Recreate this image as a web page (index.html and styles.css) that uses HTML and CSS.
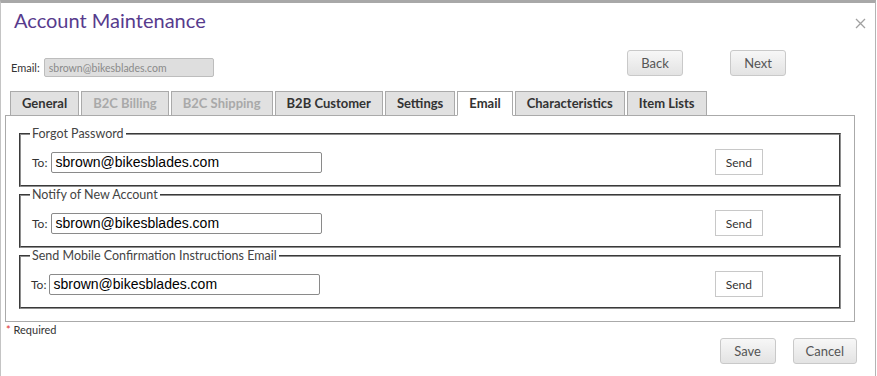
FILE: index.html
```html
<!DOCTYPE html>
<html lang="en">
<head>
  <meta charset="UTF-8" />
  <title>Account Maintenance</title>
  <link rel="stylesheet" href="styles.css">
</head>
<body>
  <div class="dialog">
    <div class="dialog-header">
      <h1 class="dialog-title">Account Maintenance</h1>
      <button type="button" class="close-btn" aria-label="Close">
        <svg width="11" height="11" viewBox="0 0 11 11"><path d="M1 1 L10 10 M10 1 L1 10" stroke="#a0a0a0" stroke-width="1.3" fill="none"/></svg>
      </button>
    </div>

    <div class="top-row">
      <div class="account-email">
        <label for="accountEmail">Email:</label>
        <input type="text" id="accountEmail" value="sbrown@bikesblades.com" disabled />
      </div>
      <div class="nav-buttons">
        <button type="button" class="btn">Back</button>
        <button type="button" class="btn">Next</button>
      </div>
    </div>

    <ul class="tabs">
      <li class="tab">General</li>
      <li class="tab disabled">B2C Billing</li>
      <li class="tab disabled">B2C Shipping</li>
      <li class="tab">B2B Customer</li>
      <li class="tab">Settings</li>
      <li class="tab active">Email</li>
      <li class="tab">Characteristics</li>
      <li class="tab">Item Lists</li>
    </ul>

    <div class="tab-panel">
      <fieldset class="mail-group">
        <legend>Forgot Password</legend>
        <div class="mail-row">
          <label>To:</label>
          <input type="text" class="mail-input" value="sbrown@bikesblades.com" />
          <button type="button" class="send-btn">Send</button>
        </div>
      </fieldset>

      <fieldset class="mail-group">
        <legend>Notify of New Account</legend>
        <div class="mail-row">
          <label>To:</label>
          <input type="text" class="mail-input" value="sbrown@bikesblades.com" />
          <button type="button" class="send-btn">Send</button>
        </div>
      </fieldset>

      <fieldset class="mail-group">
        <legend>Send Mobile Confirmation Instructions Email</legend>
        <div class="mail-row tight">
          <label>To:</label>
          <input type="text" class="mail-input" value="sbrown@bikesblades.com" />
          <button type="button" class="send-btn">Send</button>
        </div>
      </fieldset>
    </div>

    <div class="required-note"><span class="asterisk">*</span> Required</div>

    <div class="dialog-footer">
      <button type="button" class="btn">Save</button>
      <button type="button" class="btn">Cancel</button>
    </div>
  </div>
</body>
</html>
```

FILE: styles.css
```css
:root {
  --title-color: #573b8d;
  --text-color: #333;
  --muted-color: #a9a9a9;
  --line-color: #aaa;
  --tab-bg: #e1e1e1;
}

* {
  box-sizing: border-box;
  margin: 0;
  padding: 0;
}

body {
  font-family: Lato, "Open Sans", sans-serif;
  color: var(--text-color);
  background: #fff;
}

.dialog {
  min-height: 376px;
  margin-right: 1px;
  border-top: 3px solid #a8a8a8;
  border-left: 1px solid #c4c4c4;
  border-right: 1px solid #b4b4b4;
  display: flex;
  flex-direction: column;
}

.dialog-header {
  display: flex;
  justify-content: space-between;
  align-items: flex-start;
  padding: 4px 9px 0 13px;
}

.dialog-title {
  font-size: 20px;
  line-height: 26px;
  font-weight: normal;
  color: var(--title-color);
}

.close-btn {
  background: none;
  border: none;
  margin-top: 11px;
  line-height: 0;
  cursor: pointer;
}

.top-row {
  display: flex;
  align-items: flex-end;
  margin-top: 17px;
  padding-left: 10px;
}

.account-email {
  display: flex;
  align-items: center;
  font-size: 11px;
}

.account-email label {
  margin-right: 4px;
}

.account-email input {
  width: 170px;
  height: 19px;
  padding: 0 4px;
  font-family: inherit;
  font-size: 10.5px;
  color: #8a8a8a;
  background: #dedede;
  border: 1px solid #bdbdbd;
  border-radius: 2px;
}

.nav-buttons {
  display: flex;
  gap: 47px;
  margin-left: auto;
  margin-right: 89px;
  margin-bottom: 1px;
}

.btn {
  min-width: 56px;
  height: 26px;
  padding: 0 12px;
  font-family: inherit;
  font-size: 13px;
  color: #555;
  background: linear-gradient(#f7f7f7, #e3e3e3);
  border: 1px solid #c9c9c9;
  border-radius: 3px;
  cursor: pointer;
}

.tabs {
  list-style: none;
  display: flex;
  gap: 2px;
  margin-top: 14px;
  margin-bottom: -1px;
  padding-left: 9px;
  position: relative;
}

.tab {
  height: 25px;
  padding: 0 11px;
  line-height: 23px;
  font-size: 13px;
  font-weight: bold;
  color: var(--text-color);
  background: var(--tab-bg);
  border: 1px solid var(--line-color);
}

.tab.disabled {
  color: var(--muted-color);
}

.tab.active {
  background: #fff;
  border-bottom-color: #fff;
}

.tab-panel {
  margin: 0 20px 0 4px;
  padding: 10px 13px 12px;
  border: 1px solid var(--line-color);
}

.mail-group {
  border: 2px groove #8e8e8e;
  padding: 8px 76px 10px 11px;
}

.mail-group legend {
  font-size: 12.5px;
  line-height: 15px;
  color: #444;
  padding: 0 2px;
  margin-left: -2px;
}

.mail-row {
  display: flex;
  align-items: center;
  font-size: 12px;
}

.mail-row label {
  margin-right: 4px;
}

.mail-row.tight {
  margin-left: -1px;
}

.mail-row.tight label {
  margin-right: 3px;
}

.mail-input {
  width: 271px;
  height: 21px;
  padding: 0 3px;
  font-family: "Liberation Sans", Arial, sans-serif;
  font-size: 14px;
  color: #000;
  border: 1px solid #8a8a8a;
  border-radius: 2px;
}

.send-btn {
  height: 26px;
  margin-left: auto;
  padding: 0 10px;
  font-family: inherit;
  font-size: 12px;
  color: var(--text-color);
  background: #fff;
  border: 1px solid #c8c8c8;
  cursor: pointer;
}

.required-note {
  font-size: 11px;
  line-height: 15px;
  padding-left: 5px;
}

.asterisk {
  color: #e03030;
}

.dialog-footer {
  display: flex;
  justify-content: flex-end;
  gap: 17px;
  margin-top: 1px;
  padding-right: 18px;
}
```
